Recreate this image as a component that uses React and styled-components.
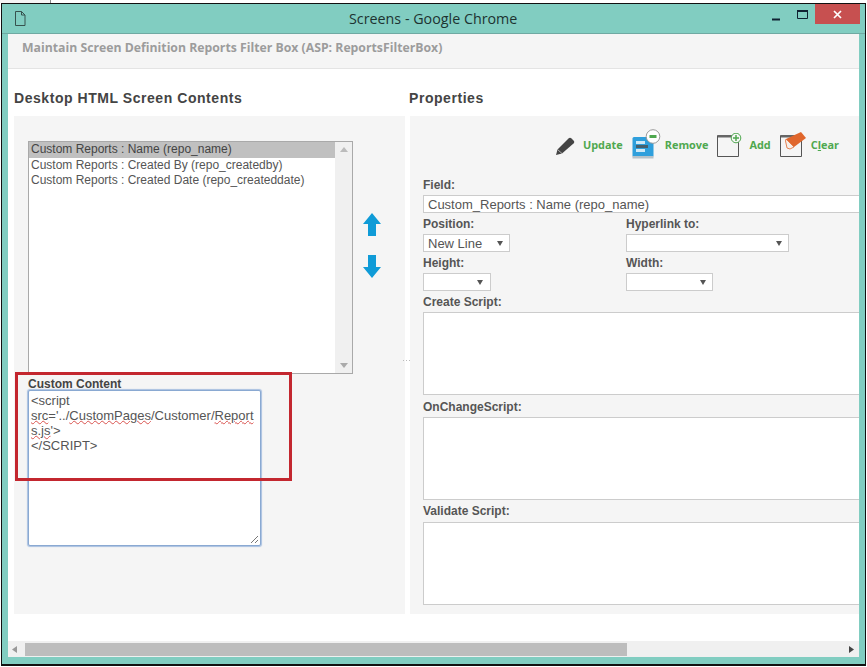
import React from "react";
import styled, { createGlobalStyle } from "styled-components";

const Global = createGlobalStyle`
  html, body { margin: 0; padding: 0; width: 867px; height: 667px; overflow: hidden; background: #fff; }
  * { box-sizing: border-box; }
`;
const Page = styled.div`
  position: relative; width: 867px; height: 667px; overflow: hidden; background: #fff;
  font-family: "Liberation Sans", Arial, sans-serif;
`;
const TopStrip = styled.div`
  height: 3px; width: 51px; border-right: 1px solid #888; background: #f4f4f4;
`;
const Frame = styled.div`
  margin-left: 1px; width: 865px; height: 663px; border: 1px solid #111; border-bottom-width: 2px;
  background: #81cdc1; display: flex; flex-direction: column;
`;
const TitleBar = styled.div`
  height: 30px; flex: none; display: flex; align-items: flex-start; position: relative;
  border-bottom: 1px solid #6fa9a2;
`;
const DocIcon = styled.svg`
  width: 12px; height: 15px; margin: 7px 0 0 12px; flex: none;
`;
const Title = styled.div`
  position: absolute; left: 347px; top: 6px; font: 14.3px/18px "Open Sans", sans-serif; color: #1d3331; white-space: nowrap;
`;
const Controls = styled.div`
  margin-left: auto; margin-right: 5px; display: flex; height: 20px;
`;
const Ctl = styled.div`
  width: ${p => p.$w}px; height: 20px; display: flex; align-items: center; justify-content: center;
  background: ${p => p.$close ? "#c75050" : "transparent"};
`;
const Win = styled.div`
  flex: none; height: 623px; margin: 0 6px; background: #fff; display: flex; flex-direction: column;
`;
const Header = styled.div`
  height: 35px; flex: none; background: #f5f5f5; border-bottom: 1px solid #e4e4e4; padding: 6px 0 0 14px;
  font: 700 12.25px/16px "Open Sans", sans-serif; color: #9c9c9c; white-space: nowrap;
`;
const Titles = styled.div`
  height: 47px; flex: none; display: flex; align-items: flex-start; padding: 21px 0 0 6px;
`;
const H2 = styled.h2`
  margin: 0; font: 700 14px/16px "Liberation Sans", sans-serif; color: #444; letter-spacing: 0.55px;
  width: ${p => p.$w}px; flex: none;
`;
const Panels = styled.div`
  height: 498px; flex: none; display: flex; gap: 5px; margin-left: 6px; position: relative;
`;
const LeftPanel = styled.section`
  width: 391px; flex: none; background: #f5f5f5; padding: 25px 0 0 14px;
`;
const RightPanel = styled.section`
  flex: 1; min-width: 0; background: #f5f5f5; padding: 0 0 0 13px; overflow: hidden;
`;
const Splitter = styled.div`
  position: absolute; left: 389px; top: 244px; width: 7px; height: 1px;
  background: repeating-linear-gradient(90deg, #bbb 0 1px, transparent 1px 3px);
`;
const ListRow = styled.div`
  display: flex; align-items: flex-start;
`;
const ListBox = styled.div`
  width: 325px; height: 233px; flex: none; border: 1px solid #a9a9a9; background: #fff; display: flex;
`;
const Options = styled.div`
  flex: 1; font-size: 12px; color: #555;
`;
const Option = styled.div`
  height: ${p => p.$h}px; line-height: 15px; padding-left: 2px; white-space: nowrap;
  background: ${p => p.$selected ? "#c0c0c0" : "transparent"}; color: ${p => p.$selected ? "#444" : "#555"};
`;
const VScroll = styled.div`
  width: 17px; flex: none; background: #f0f0f0; display: flex; flex-direction: column; justify-content: space-between; align-items: center; padding: 5px 0;
`;
const Arrows = styled.div`
  margin: 72px 0 0 10px; width: 18px; display: flex; flex-direction: column; gap: 19px;
`;
const Arrow = styled.svg`
  width: 18px; height: 23px; display: block;
`;
const CustomLabel = styled.div`
  font: 700 12px/12px "Liberation Sans", sans-serif; color: #444; margin-top: 4px;
`;
const EditBox = styled.div`
  position: relative; width: 233px; height: 156px; border: 1px solid #8aa9d2; border-radius: 2px; background: #fff;
  padding: 2px 2px; font: 13px/15px "Liberation Sans", sans-serif; color: #555; overflow: hidden; box-shadow: 0 0 1px 1px #a9c0e0;
`;
const Line = styled.div`
  white-space: nowrap;
`;
const Typo = styled.span`
  text-decoration: underline wavy #d9534f 1px; text-underline-offset: 0;
`;
const Grip = styled.svg`
  position: absolute; right: 1px; bottom: 1px; width: 9px; height: 9px;
`;
const Highlight = styled.div`
  position: absolute; left: 15px; top: 372px; width: 277px; height: 109px; border: 3px solid #c3272f; pointer-events: none;
`;
const Toolbar = styled.div`
  height: 61px; display: flex; align-items: flex-start; margin-left: 133px; position: relative;
`;
const ToolIcon = styled.svg`
  flex: none; display: block; width: ${p => p.$w}px; height: ${p => p.$h}px;
  margin: ${p => p.$t}px ${p => p.$r}px 0 ${p => p.$l}px;
`;
const ToolText = styled.span`
  flex: none; margin-top: 21px; font: 700 10.9px/15px "Open Sans", sans-serif; color: #4fa84f; white-space: nowrap;
  u { text-decoration: underline; }
`;
const FieldLabel = styled.div`
  height: 16px; margin: ${p => p.$mt ?? 3}px 0 ${p => p.$mb ?? 2}px; font: 700 12px/16px "Liberation Sans", sans-serif; color: #555;
  white-space: nowrap;
`;
const TextField = styled.div`
  width: 460px; height: 18px; border: 1px solid #ccc; background: #fff; font-size: 13px; line-height: 18px; color: #555; padding-left: 4px; white-space: nowrap;
`;
const TwoCols = styled.div`
  display: grid; grid-template-columns: 203px 1fr;
`;
const SelectBox = styled.div`
  position: relative; width: ${p => p.$w}px; height: 18px; border: 1px solid #ccc; background: #fff; font-size: 13px; line-height: 18px; color: #555; padding-left: 4px; white-space: nowrap;
`;
const Caret = styled.svg`
  position: absolute; right: ${p => p.$r}px; top: 6px; width: 6px; height: 5px;
`;
const ScriptBox = styled.div`
  width: 460px; height: ${p => p.$h}px; border: 1px solid #ccc; background: #fff;
`;
const HScroll = styled.div`
  height: 16px; flex: none; margin-top: 27px; background: #f0f0f0; display: flex; align-items: center; position: relative; padding: 2px 0;
`;
const HThumb = styled.div`
  position: absolute; left: 17px; top: 2px; bottom: 1px; width: 602px; background: #bdbdbd;
`;
const HArrow = styled.svg`
  position: absolute; top: 5px; width: 5px; height: 7px; left: ${p => p.$left}px;
`;

const Select = ({ w, r, children }) => (
  <SelectBox $w={w}>
    {children}
    <Caret $r={r} viewBox="0 0 6 5"><path d="M0 0h6L3 5z" fill="#555" /></Caret>
  </SelectBox>
);

export default function App() {
  return (
    <Page>
      <Global />
      <TopStrip />
      <Frame>
        <TitleBar>
          <DocIcon viewBox="0 0 12 15">
            <path d="M1.500.5h6l3.500 3.500v10.500h-9.500zM7.500.5v3.500h3.500" fill="none" stroke="#37524e" />
          </DocIcon>
          <Title>Screens - Google Chrome</Title>
          <Controls>
            <Ctl $w={26}>
              <svg width="9" height="8" viewBox="0 0 9 8" style={{ marginTop: 6 }}><path d="M0 6.500h8" stroke="#123" strokeWidth="2" /></svg>
            </Ctl>
            <Ctl $w={26}>
              <svg width="11" height="9" viewBox="0 0 11 9"><path d="M.5 1.500h10v7H.5z" fill="none" stroke="#123" /><path d="M0 1h11" stroke="#123" strokeWidth="2" /></svg>
            </Ctl>
            <Ctl $w={45} $close>
              <svg width="9" height="9" viewBox="0 0 9 9"><path d="M1 1l7 7M8 1l-7 7" stroke="#fff" strokeWidth="1.700" /></svg>
            </Ctl>
          </Controls>
        </TitleBar>
        <Win>
          <Header>Maintain Screen Definition Reports Filter Box (ASP: ReportsFilterBox)</Header>
          <Titles>
            <H2 $w={395}>Desktop HTML Screen Contents</H2>
            <H2 $w={120}>Properties</H2>
          </Titles>
          <Panels>
            <LeftPanel>
              <ListRow>
                <ListBox>
                  <Options>
                    <Option $selected $h={16}>Custom Reports : Name (repo_name)</Option>
                    <Option $h={15}>Custom Reports : Created By (repo_createdby)</Option>
                    <Option $h={15}>Custom Reports : Created Date (repo_createddate)</Option>
                  </Options>
                  <VScroll>
                    <svg width="8" height="5" viewBox="0 0 8 5"><path d="M4 0l4 5H0z" fill="#bbb" /></svg>
                    <svg width="8" height="5" viewBox="0 0 8 5"><path d="M0 0h8L4 5z" fill="#aaa" /></svg>
                  </VScroll>
                </ListBox>
                <Arrows>
                  <Arrow viewBox="0 0 18 23"><path d="M9 0l9 11h-5v12H5V11H0z" fill="#0f9bd7" /></Arrow>
                  <Arrow viewBox="0 0 18 23"><path d="M5 0h8v12h5L9 23 0 12h5z" fill="#0f9bd7" /></Arrow>
                </Arrows>
              </ListRow>
              <CustomLabel>Custom Content</CustomLabel>
              <EditBox>
                <Line>&lt;script</Line>
                <Line><Typo>src</Typo>='../<Typo>CustomPages</Typo>/Customer/<Typo>Report</Typo></Line>
                <Line><Typo>s.js</Typo>'&gt;</Line>
                <Line>&lt;/SCRIPT&gt;</Line>
                <Grip viewBox="0 0 9 9"><path d="M1 8l7-7M5 8l3-3" stroke="#777" fill="none" /></Grip>
              </EditBox>
            </LeftPanel>
            <RightPanel>
              <Toolbar>
                <ToolIcon $w={19} $h={18} $t={21} $r={8} $l={0} viewBox="0 0 19 18">
                  <path d="M0 18l1.500-5.500L12.500 1.500c1-1 2-1 3 0l2 2c1 1 1 2 0 3L6 16.500z" fill="#444" />
                  <path d="M1.500 12.500l4.500 4" stroke="#f5f5f5" strokeWidth=".6" />
                </ToolIcon>
                <ToolText>Update</ToolText>
                <ToolIcon $w={29} $h={30} $t={13} $r={4} $l={9} viewBox="0 0 29 30">
                  <rect x="0.500" y="8" width="21" height="20" rx="1.500" fill="#2f9fdc" />
                  <rect x="0.500" y="27" width="21" height="2.500" fill="#b6c2c9" />
                  <path d="M4 12h9v3H4zM4 20h9v3H4z" fill="#cfe9f7" />
                  <path d="M4 16h12v3H4z" fill="#46606e" />
                  <circle cx="21" cy="7.500" r="6.800" fill="#fff" stroke="#9a9a9a" />
                  <path d="M17.500 6h7v3h-7z" fill="#4fa84f" />
                </ToolIcon>
                <ToolText>Remove</ToolText>
                <ToolIcon $w={27} $h={25} $t={17} $r={5} $l={9} viewBox="0 0 27 25">
                  <path d="M.5 2.500h21v21H.5z" fill="#f5f5f5" stroke="#555" />
                  <path d="M1 2h20v2.500H1z" fill="#666" />
                  <circle cx="19" cy="5" r="4.800" fill="#f5f5f5" stroke="#4fa84f" />
                  <path d="M19 2v6M16 5h6" stroke="#4fa84f" strokeWidth="1.500" />
                </ToolIcon>
                <ToolText>Add</ToolText>
                <ToolIcon $w={27} $h={26} $t={16} $r={4} $l={9} viewBox="0 0 27 26">
                  <path d="M.5 3.500h21v21H.5z" fill="#f5f5f5" stroke="#555" />
                  <path d="M1 3h20v2.500H1z" fill="#666" />
                  <path d="M6 7L21 0l5 6-12 9z" fill="#e0662c" />
                  <path d="M6 7l8 8-4 2-3-1-1.500-7z" fill="#f6efe9" stroke="#e0662c" strokeWidth=".8" />
                </ToolIcon>
                <ToolText>C<u>l</u>ear</ToolText>
              </Toolbar>
              <FieldLabel $mt={0}>Field:</FieldLabel>
              <TextField>Custom_Reports : Name (repo_name)</TextField>
              <TwoCols>
                <div>
                  <FieldLabel>Position:</FieldLabel>
                  <Select w={87} r={6}>New Line</Select>
                </div>
                <div>
                  <FieldLabel>Hyperlink to:</FieldLabel>
                  <Select w={163} r={6} />
                </div>
                <div>
                  <FieldLabel>Height:</FieldLabel>
                  <Select w={68} r={7} />
                </div>
                <div>
                  <FieldLabel>Width:</FieldLabel>
                  <Select w={87} r={6} />
                </div>
              </TwoCols>
              <FieldLabel>Create Script:</FieldLabel>
              <ScriptBox $h={83} />
              <FieldLabel $mt={4}>OnChangeScript:</FieldLabel>
              <ScriptBox $h={83} />
              <FieldLabel $mb={3}>Validate Script:</FieldLabel>
              <ScriptBox $h={83} />
            </RightPanel>
            <Splitter />
          </Panels>
          <HScroll>
            <HArrow $left={4} viewBox="0 0 5 7"><path d="M5 0v7L0 3.500z" fill="#999" /></HArrow>
            <HThumb />
            <HArrow $left={841} viewBox="0 0 5 7"><path d="M0 0v7l5-3.500z" fill="#444" /></HArrow>
          </HScroll>
        </Win>
      </Frame>
      <Highlight />
    </Page>
  );
}
